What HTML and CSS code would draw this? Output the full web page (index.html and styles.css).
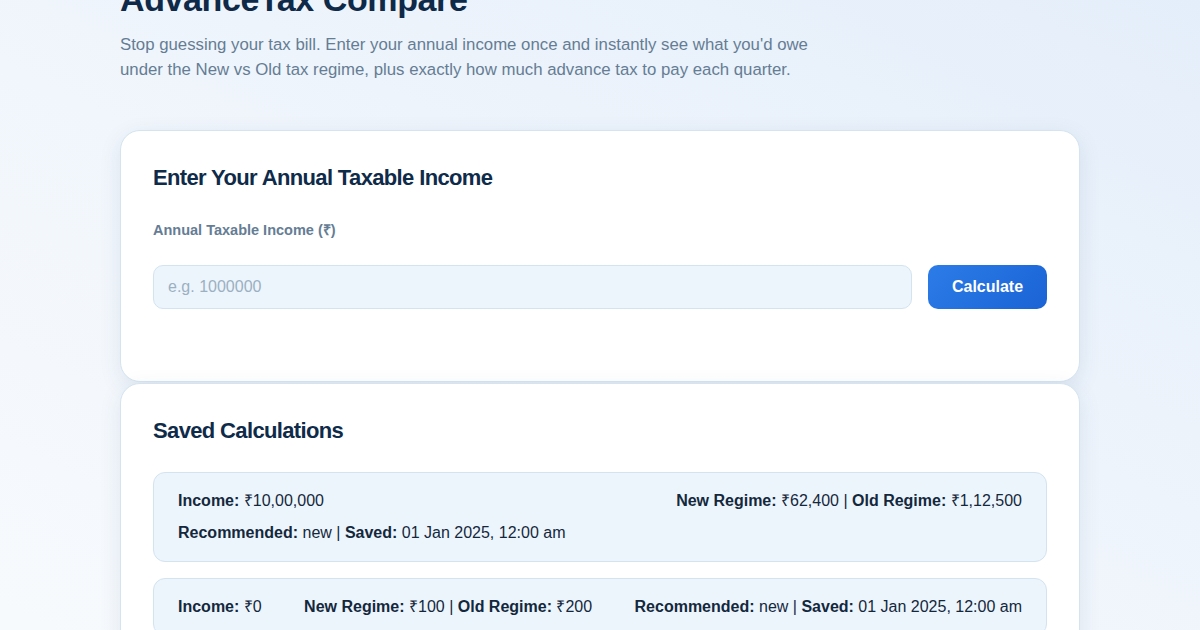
FILE: index.html
```html
<!DOCTYPE html>
<html lang="en">
<head>
<meta charset="utf-8">
<title>AdvanceTax Compare</title>
<link rel="stylesheet" href="styles.css">
</head>
<body>
<main class="container">
  <header class="hero">
    <h1 class="title">AdvanceTax Compare</h1>
    <p class="subtitle">Stop guessing your tax bill. Enter your annual income once and instantly see what you'd owe under the New vs Old tax regime, plus exactly how much advance tax to pay each quarter.</p>
  </header>

  <section class="card input-card">
    <h2 class="card-title">Enter Your Annual Taxable Income</h2>
    <label class="field-label" for="income">Annual Taxable Income (₹)</label>
    <div class="input-row">
      <input id="income" class="income-input" type="text" placeholder="e.g. 1000000">
      <button class="calc-btn" type="button">Calculate</button>
    </div>
  </section>

  <section class="card saved-card">
    <h2 class="card-title saved-title">Saved Calculations</h2>
    <div class="saved-list">
      <div class="saved-item">
        <span><b>Income:</b> ₹10,00,000</span>
        <span><b>New Regime:</b> ₹62,400 | <b>Old Regime:</b> ₹1,12,500</span>
        <span><b>Recommended:</b> new | <b>Saved:</b> 01 Jan 2025, 12:00 am</span>
      </div>
      <div class="saved-item">
        <span><b>Income:</b> ₹0</span>
        <span><b>New Regime:</b> ₹100 | <b>Old Regime:</b> ₹200</span>
        <span><b>Recommended:</b> new | <b>Saved:</b> 01 Jan 2025, 12:00 am</span>
      </div>
    </div>
  </section>
</main>
</body>
</html>
```

FILE: styles.css
```css
* { box-sizing: border-box; }
html, body { height: 100%; }
body {
  margin: 0;
  font-family: "Liberation Sans", Arial, sans-serif;
  color: #10263d;
  background: linear-gradient(to top right, #f7fafd 0%, #f1f6fc 45%, #e4eefa 100%);
  overflow: hidden;
}
.container {
  width: 960px;
  margin: 0 auto;
}
.hero {
  margin-top: -20px;
}
.title {
  margin: 0;
  font-size: 34px;
  line-height: 39px;
  font-weight: 700;
  letter-spacing: -0.4px;
  color: #0e2a48;
}
.subtitle {
  margin: 13px 0 0;
  max-width: 700px;
  font-size: 16.8px;
  line-height: 25px;
  color: #657d94;
}
.card {
  background: #ffffff;
  border: 1px solid #d6e4ef;
  border-radius: 20px;
  box-shadow: 0 6px 22px rgba(30, 70, 120, 0.10);
  padding: 32px;
}
.input-card {
  margin-top: 48px;
  padding-bottom: 72px;
}
.saved-card {
  margin-top: 1px;
}
.card-title {
  margin: 0;
  font-size: 22px;
  line-height: 30px;
  font-weight: 700;
  color: #0f2b4a;
  letter-spacing: -0.64px;
}
.field-label {
  display: block;
  margin-top: 27px;
  font-size: 14.5px;
  line-height: 20px;
  font-weight: 700;
  color: #657d94;
}
.input-row {
  display: flex;
  gap: 16px;
  margin-top: 25px;
}
.income-input {
  flex: 1;
  height: 44px;
  padding: 0 14px;
  font-family: inherit;
  font-size: 16px;
  color: #10263d;
  background: #edf5fc;
  border: 1px solid #d3e3f0;
  border-radius: 10px;
  outline: none;
}
.income-input::placeholder { color: #9bb0c2; }
.calc-btn {
  width: 119px;
  height: 44px;
  font-family: inherit;
  font-size: 16px;
  font-weight: 700;
  color: #ffffff;
  background: linear-gradient(135deg, #2c7ce8 0%, #1a63d6 100%);
  border: none;
  border-radius: 10px;
}
.saved-title {
  margin-bottom: 26px;
}
.saved-list {
  display: flex;
  flex-direction: column;
  gap: 16px;
}
.saved-item {
  display: flex;
  flex-wrap: wrap;
  justify-content: space-between;
  row-gap: 8px;
  column-gap: 24px;
  padding: 16px 24px;
  font-size: 16px;
  line-height: 24px;
  color: #14283d;
  background: #edf5fc;
  border: 1px solid #d3e3f0;
  border-radius: 12px;
}
.saved-item b { font-weight: 700; }
```
